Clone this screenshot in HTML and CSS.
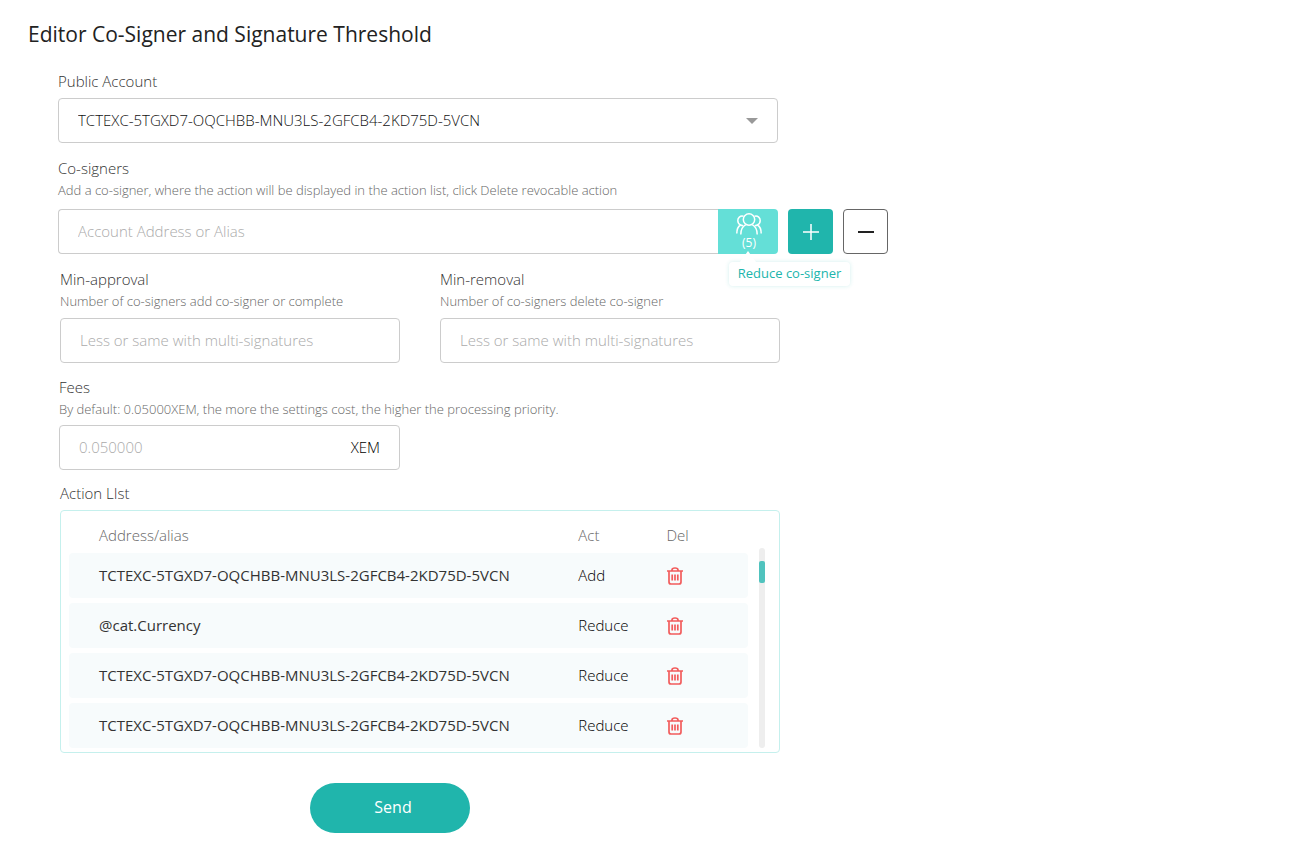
FILE: index.html
```html
<!DOCTYPE html>
<html lang="en">
<head>
<meta charset="utf-8">
<meta name="viewport" content="width=device-width, initial-scale=1">
<title>Editor Co-Signer and Signature Threshold</title>
<link rel="stylesheet" href="styles.css">
</head>
<body>
<svg class="sprite" aria-hidden="true">
  <symbol id="trash" viewBox="0 0 16 18">
    <path d="M0 4h16M5 4V3a3 2 0 0 1 6 0v1M2 4v11q0 2 2 2h8q2 0 2-2V4" fill="none" stroke="currentColor" stroke-width="1.7"/>
    <path d="M5.2 7.500v6M8 7.500v6M10.800 7.500v6" fill="none" stroke="currentColor" stroke-width="1.700"/>
  </symbol>
</svg>
<main class="page">
  <h1 class="title">Editor Co-Signer and Signature Threshold</h1>
  <form class="form">
    <section class="group">
      <label class="label" for="account">Public Account</label>
      <div class="select-wrap">
        <select class="field select" id="account">
          <option>TCTEXC-5TGXD7-OQCHBB-MNU3LS-2GFCB4-2KD75D-5VCN</option>
        </select>
        <svg class="caret" viewBox="0 0 12 6" aria-hidden="true"><path d="M0 0h12L6 6z" fill="#999"/></svg>
      </div>
    </section>

    <section class="group group-signers">
      <label class="label" for="signer">Co-signers</label>
      <p class="hint">Add a co-signer, where the action will be displayed in the action list, click Delete revocable action</p>
      <div class="signer-row">
        <div class="signer-box">
          <input class="field signer-input" id="signer" type="text" placeholder="Account Address or Alias">
          <button class="people" type="button" aria-label="Co-signers, 5">
            <svg class="people-icon" viewBox="0 0 26 22" fill="none" stroke="currentColor" stroke-width="1.500" aria-hidden="true">
              <circle cx="13" cy="6.500" r="5.700"/>
              <path d="M4.800 21.500c0-5 1.700-8 5-9.800M21.200 21.500c0-5-1.700-8-5-9.800"/>
              <path d="M7.500 3.300C4 2.300 1.800 5 1.800 7.600c0 2 1.100 3.600 2.700 4.400C2 13.500.8 16.500.8 20.500M4.500 12c.7.400 1.500.6 2.500.5M18.500 3.300c3.500-1 5.700 1.700 5.700 4.300 0 2-1.100 3.600-2.700 4.400 2.500 1.500 3.700 4.500 3.700 8.500M21.500 12c-.7.400-1.500.6-2.500.5"/>
            </svg>
            <span class="people-count">(5)</span>
          </button>
          <div class="tooltip" role="tooltip">Reduce co-signer</div>
        </div>
        <button class="square square-add" type="button" aria-label="Add co-signer">
          <svg class="square-icon" viewBox="0 0 16 16" aria-hidden="true"><path d="M8 0v16M0 8h16" stroke="currentColor" stroke-width="1.500"/></svg>
        </button>
        <button class="square square-remove" type="button" aria-label="Reduce co-signer">
          <svg class="square-icon" viewBox="0 0 16 16" aria-hidden="true"><path d="M0 8h16" stroke="currentColor" stroke-width="2"/></svg>
        </button>
      </div>
    </section>

    <div class="pair">
      <section class="group">
        <label class="label" for="approval">Min-approval</label>
        <p class="hint">Number of co-signers add co-signer or complete</p>
        <input class="field" id="approval" type="text" placeholder="Less or same with multi-signatures">
      </section>
      <section class="group">
        <label class="label" for="removal">Min-removal</label>
        <p class="hint">Number of co-signers delete co-signer</p>
        <input class="field" id="removal" type="text" placeholder="Less or same with multi-signatures">
      </section>
    </div>

    <section class="group group-fees">
      <label class="label" for="fees">Fees</label>
      <p class="hint">By default: 0.05000XEM, the more the settings cost, the higher the processing priority.</p>
      <div class="field fee">
        <input class="fee-input" id="fees" type="text" placeholder="0.050000">
        <span class="fee-unit">XEM</span>
      </div>
    </section>

    <section class="group group-actions">
      <h2 class="label" id="actions">Action LIst</h2>
      <div class="panel">
        <table class="table" aria-labelledby="actions">
          <thead>
            <tr><th class="col-address">Address/alias</th><th class="col-act">Act</th><th class="col-del">Del</th></tr>
          </thead>
          <tbody>
            <tr><td>TCTEXC-5TGXD7-OQCHBB-MNU3LS-2GFCB4-2KD75D-5VCN</td><td>Add</td><td><button class="delete" type="button" aria-label="Delete"><svg class="trash"><use href="#trash"/></svg></button></td></tr>
            <tr><td>@cat.Currency</td><td>Reduce</td><td><button class="delete" type="button" aria-label="Delete"><svg class="trash"><use href="#trash"/></svg></button></td></tr>
            <tr><td>TCTEXC-5TGXD7-OQCHBB-MNU3LS-2GFCB4-2KD75D-5VCN</td><td>Reduce</td><td><button class="delete" type="button" aria-label="Delete"><svg class="trash"><use href="#trash"/></svg></button></td></tr>
            <tr><td>TCTEXC-5TGXD7-OQCHBB-MNU3LS-2GFCB4-2KD75D-5VCN</td><td>Reduce</td><td><button class="delete" type="button" aria-label="Delete"><svg class="trash"><use href="#trash"/></svg></button></td></tr>
          </tbody>
        </table>
        <div class="track"><div class="thumb"></div></div>
      </div>
    </section>

    <button class="send" type="submit">Send</button>
  </form>
</main>
</body>
</html>
```
FILE: styles.css
```css
* { box-sizing: border-box; }

body {
  margin: 0;
  background: #fff;
  color: #000;
  font-family: "Open Sans", "Noto Sans", sans-serif;
  font-size: 15px;
  font-weight: 300;
}

button, input, select { font: inherit; }
button { padding: 0; border: 0; cursor: pointer; }

.sprite { position: absolute; width: 0; height: 0; }

.page { padding: 20px 28px 8px; }

.title {
  margin: 0 0 22px;
  color: #222;
  font-size: 21px;
  font-weight: 400;
  line-height: 28px;
}

.form {
  display: flex;
  flex-direction: column;
  max-width: 860px;
  padding-left: 30px;
}

.group { max-width: 720px; }
.group-signers { max-width: 830px; margin-top: 14px; }

.label {
  display: block;
  margin: 0 0 6px;
  color: #333;
  font-size: 15px;
  font-weight: 300;
  line-height: 22px;
}
.label:has(+ .hint) { margin-bottom: 2px; }

.hint {
  margin: 0 0 8px;
  color: #666;
  font-size: 13px;
  line-height: 18px;
}
.group-signers .hint { margin-bottom: 10px; }

.field {
  display: block;
  width: 100%;
  height: 45px;
  padding: 0 19px 2px;
  border: 1px solid #ccc;
  border-radius: 4px;
  background: #fff;
}
::placeholder { color: #aaa; opacity: 1; }

.select-wrap { position: relative; }
.select { appearance: none; color: #111; }
.caret {
  position: absolute;
  top: 20px;
  right: 20px;
  width: 12px;
  height: 6px;
  pointer-events: none;
}

.signer-row { display: flex; gap: 10px; }
.signer-box { position: relative; display: flex; flex: 1; }
.signer-input {
  flex: 1;
  width: auto;
  min-width: 0;
  border-right: 0;
  border-radius: 4px 0 0 4px;
}
.people {
  display: flex;
  flex-direction: column;
  align-items: center;
  width: 60px;
  padding: 4px 0 0 2px;
  border-radius: 0 4px 4px 0;
  background: #64dfd7;
  color: #fff;
}
.people-icon { display: block; width: 26px; height: 22px; }
.people-count { font-size: 12px; font-weight: 400; line-height: 16px; }

.tooltip {
  position: absolute;
  top: 53px;
  right: -72px;
  width: 121px;
  padding-bottom: 2px;
  border-radius: 4px;
  background: #fff;
  box-shadow: 0 0 4px rgba(32, 181, 172, 0.2);
  color: #20b5ac;
  font-size: 13px;
  font-weight: 400;
  line-height: 22px;
  text-align: center;
  white-space: nowrap;
}
.tooltip::before {
  content: "";
  position: absolute;
  bottom: 100%;
  left: 11px;
  width: 16px;
  height: 11px;
  background: #fff;
  clip-path: polygon(50% 0, 100% 100%, 0 100%);
}

.square {
  display: flex;
  align-items: center;
  justify-content: center;
  width: 45px;
  height: 45px;
  border-radius: 4px;
}
.square-add { background: #20b5ac; color: #fff; }
.square-remove { border: 1px solid #666; background: #fff; color: #222; }
.square-icon { width: 16px; height: 16px; }

.pair {
  display: grid;
  grid-template-columns: 1fr 1fr;
  gap: 40px;
  max-width: 722px;
  margin-top: 14px;
  padding-left: 2px;
}

.group-fees { margin-top: 13px; padding-left: 1px; }
.group-fees .hint { margin-bottom: 7px; }
.fee { display: flex; align-items: center; max-width: 341px; }
.fee-input {
  flex: 1;
  min-width: 0;
  padding: 0;
  border: 0;
  background: none;
}

.group-actions { max-width: 722px; margin-top: 12px; padding-left: 2px; }
.panel {
  display: flex;
  gap: 11px;
  padding: 0 14px 0 8px;
  border: 1px solid #c5f0ed;
  border-radius: 4px;
}
.table {
  flex: 1;
  margin-bottom: -1px;
  border-spacing: 0 5px;
  table-layout: fixed;
}
.table th {
  height: 32px;
  padding: 6px 0 0;
  color: #666;
  font-weight: 300;
  text-align: left;
}
.table td { height: 45px; padding: 0 0 2px; background: #f7fbfc; }
.table td:first-child { border-radius: 4px 0 0 4px; color: #333; font-weight: 400; }
.table td:last-child { padding: 0; border-radius: 0 4px 4px 0; }
.table th:first-child, .table td:first-child { padding-left: 30px; }
.col-address { width: 75%; }
.col-act { width: 13%; }
.col-del { width: 12%; }

.delete { display: block; background: none; color: #f25c5c; }
.trash { display: block; width: 16px; height: 18px; }

.track {
  width: 6px;
  margin: 37px 0 4px;
  padding-top: 13px;
  border-radius: 3px;
  background: #eee;
}
.thumb { height: 22px; border-radius: 2px; background: #50c3be; }

.send {
  align-self: flex-start;
  width: 160px;
  height: 50px;
  margin: 30px 0 0 252px;
  padding: 0 0 2px 6px;
  border-radius: 25px;
  background: #20b5ac;
  color: #fff;
  font-size: 16px;
  font-weight: 400;
}
```
